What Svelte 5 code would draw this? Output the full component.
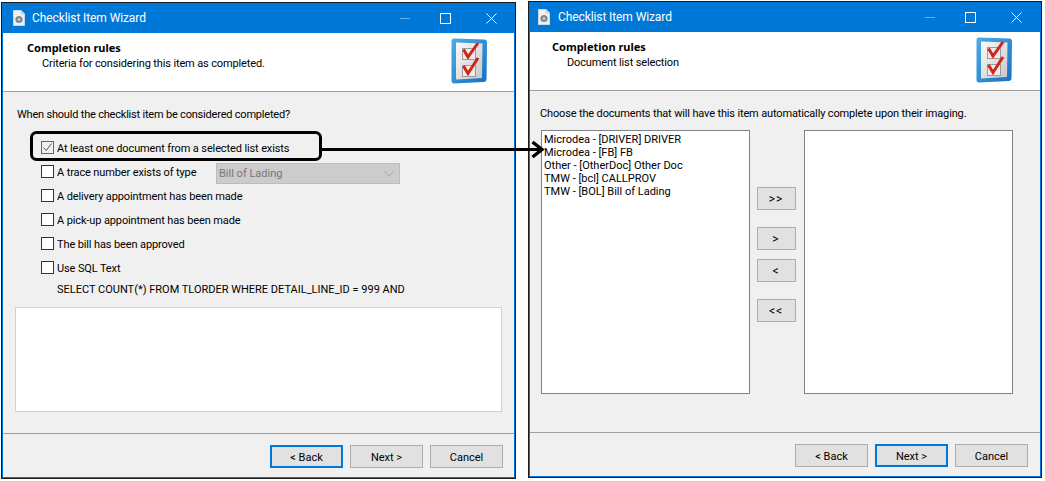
<script>
	const rules = [
		{ text: 'At least one document from a selected list exists', checked: true },
		{ text: 'A trace number exists of type', combo: 'Bill of Lading' },
		{ text: 'A delivery appointment has been made' },
		{ text: 'A pick-up appointment has been made' },
		{ text: 'The bill has been approved' },
		{ text: 'Use SQL Text' }
	];

	const documents = [
		'Microdea - [DRIVER] DRIVER',
		'Microdea - [FB] FB',
		'Other - [OtherDoc] Other Doc',
		'TMW - [bcl] CALLPROV',
		'TMW - [BOL] Bill of Lading'
	];

	const moves = ['>>', '>', '<', '<<'];
</script>

{#snippet titlebar()}
	<div class="titlebar">
		<svg class="app-icon" width="12" height="16" viewBox="0 0 12 16">
			<path d="M0.5 0.5H8L11.5 4V15.5H0.5Z" fill="#eef1f4" stroke="#cfd6dc" />
			<path d="M8 0.5V4H11.5" fill="#dfe4e8" stroke="#b9c2c9" stroke-width="0.6" />
			<circle cx="6" cy="9.5" r="3.6" fill="#7f8b94" />
			<circle cx="6" cy="9.5" r="1.2" fill="#d5dade" />
		</svg>
		<span class="title">Checklist Item Wizard</span>
		<div class="controls">
			<svg class="ctl-min" width="10" height="10" viewBox="0 0 10 10"><path d="M0 5.5H10" stroke="#66aee7" /></svg>
			<svg class="ctl-max" width="11" height="11" viewBox="0 0 11 11"><rect x="0.5" y="0.5" width="10" height="10" fill="none" stroke="#fff" /></svg>
			<svg class="ctl-close" width="11" height="11" viewBox="0 0 11 11"><path d="M0.5 0.5L10.5 10.5M10.5 0.5L0.5 10.5" stroke="#fff" /></svg>
		</div>
	</div>
{/snippet}

{#snippet banner(subtitle)}
	<div class="banner">
		<div class="banner-text">
			<b>Completion rules</b>
			<span>{subtitle}</span>
		</div>
		<svg class="check-icon" width="37" height="46" viewBox="0 0 37 46">
			<defs>
				<linearGradient id="frame" x1="0" y1="0" x2="1" y2="1">
					<stop offset="0" stop-color="#4aaee8" />
					<stop offset="1" stop-color="#1670c4" />
				</linearGradient>
				<linearGradient id="paper" x1="0" y1="0" x2="1" y2="1">
					<stop offset="0" stop-color="#fafafa" />
					<stop offset="1" stop-color="#c8c8c8" />
				</linearGradient>
			</defs>
			<path d="M3 0.5L33 1.5Q36 1.6 36 4.5L35.5 41Q35.5 44 32.5 44L3 45.5Q0.5 45.5 0.5 42.5L0.5 3Q0.5 0.5 3 0.5Z" fill="url(#frame)" />
			<path d="M5 4.5L31.5 5.5L31 40L5 41.5Z" fill="url(#paper)" />
			<rect x="11.5" y="10.5" width="13" height="11" fill="#ececec" stroke="#9a9a9a" />
			<rect x="11.5" y="27.5" width="13" height="11" fill="#ececec" stroke="#9a9a9a" />
			<path d="M12.5 11.5L17 19L27 5" fill="none" stroke="#d3241a" stroke-width="3" />
			<path d="M12.5 28L17 35.5L27 20" fill="none" stroke="#d3241a" stroke-width="3" />
		</svg>
	</div>
{/snippet}

<div class="screen">
	<section class="window first">
		<div class="frame">
			{@render titlebar()}
			{@render banner('Criteria for considering this item as completed.')}
			<div class="body rules-body">
				<p class="prompt">When should the checklist item be considered completed?</p>
				<ul class="rules">
					{#each rules as rule}
						<li>
							<span class="box">
								{#if rule.checked}
									<svg width="11" height="11" viewBox="0 0 11 11"><path d="M1.5 5.5L4.2 8.5L9.5 1.5" fill="none" stroke="#555" /></svg>
								{/if}
							</span>
							<span class="rule-text" class:with-combo={rule.combo}>{rule.text}</span>
							{#if rule.combo}
								<div class="combo">
									<span>{rule.combo}</span>
									<svg width="10" height="6" viewBox="0 0 10 6"><path d="M0.5 0.5L5 5L9.5 0.5" fill="none" stroke="#a8a8a8" /></svg>
								</div>
							{/if}
						</li>
					{/each}
				</ul>
				<p class="sql">SELECT COUNT(*) FROM TLORDER WHERE DETAIL_LINE_ID = 999 AND</p>
				<div class="sql-box"></div>
			</div>
			<div class="footer">
				<button class="default">&lt; Back</button>
				<button>Next &gt;</button>
				<button>Cancel</button>
			</div>
		</div>
	</section>

	<section class="window second">
		<div class="frame">
			{@render titlebar()}
			{@render banner('Document list selection')}
			<div class="body docs-body">
				<p class="prompt">Choose the documents that will have this item automatically complete upon their imaging.</p>
				<div class="picker">
					<div class="list">
						{#each documents as doc}
							<div>{doc}</div>
						{/each}
					</div>
					<div class="moves">
						{#each moves as move}
							<button>{move}</button>
						{/each}
					</div>
					<div class="list"></div>
				</div>
			</div>
			<div class="footer">
				<button>&lt; Back</button>
				<button class="default">Next &gt;</button>
				<button>Cancel</button>
			</div>
		</div>
	</section>

	<!-- callout drawn over both windows -->
	<svg class="callout" width="1045" height="481" viewBox="0 0 1045 481">
		<rect x="31.5" y="132.5" width="289" height="27" rx="5" fill="none" stroke="#000" stroke-width="3" />
		<path d="M321 149.5H541" stroke="#000" stroke-width="3" />
		<path d="M532.5 142L542 149.5L532.5 157" fill="none" stroke="#000" stroke-width="3.4" />
	</svg>
</div>

<style>
	:global(body) {
		background: #fff;
	}

	.screen {
		position: relative;
		width: 1045px;
		height: 481px;
		display: flex;
		align-items: flex-start;
		gap: 12px;
		padding: 1px 0 0 1px;
		box-sizing: border-box;
		font-family: Roboto, sans-serif;
		font-size: 11px;
		color: #000;
		overflow: hidden;
	}

	.window {
		box-sizing: border-box;
		height: 477px;
		border: 1px solid #1a1a1a;
	}

	.first {
		width: 515px;
		margin-top: 1px;
	}

	.second {
		width: 514px;
	}

	.frame {
		box-sizing: border-box;
		height: 100%;
		display: flex;
		flex-direction: column;
		border: 1px solid #0078d7;
		border-top: none;
		background: #f0f0f0;
	}

	.titlebar {
		flex: none;
		height: 30px;
		display: flex;
		align-items: center;
		padding-left: 10px;
		background: #0078d7;
		color: #fff;
	}

	.second .titlebar {
		padding-left: 8px;
	}

	.title {
		margin-left: 7px;
		font-size: 12px;
		letter-spacing: -0.1px;
	}

	.second .title {
		margin-left: 8px;
	}

	.controls {
		margin-left: auto;
		display: flex;
		align-items: center;
		padding-right: 18px;
	}

	.first .controls {
		padding-right: 17px;
	}

	.ctl-max {
		margin: 0 35px 0 30px;
	}

	.banner {
		flex: none;
		height: 59px;
		display: flex;
		justify-content: space-between;
		box-sizing: border-box;
		padding: 5px 27px 0 24px;
		background: #fff;
		border-bottom: 1px solid #a0a0a0;
	}

	.first .banner {
		padding-right: 26px;
	}

	.second .banner {
		padding-left: 22px;
	}

	.banner-text {
		display: flex;
		flex-direction: column;
		line-height: 16px;
		padding-top: 2px;
		letter-spacing: -0.13px;
	}

	.banner-text b {
		font-family: 'Noto Sans', sans-serif;
		font-weight: 700;
		letter-spacing: 0;
	}

	.banner-text span {
		padding-left: 15px;
	}

	.body {
		flex: 1;
		min-height: 0;
	}

	.prompt {
		margin: 0;
		line-height: 15px;
		letter-spacing: -0.15px;
	}

	.rules-body {
		padding: 15px 13px 0;
	}

	.rules-body .prompt {
		margin-left: 1px;
		letter-spacing: -0.2px;
	}

	.rules {
		list-style: none;
		margin: 13px 0 0;
		padding: 0 0 0 25px;
	}

	.rules li {
		height: 24px;
		display: flex;
		align-items: center;
	}

	.box {
		box-sizing: border-box;
		flex: none;
		width: 13px;
		height: 13px;
		border: 1px solid #333;
		background: #fff;
		display: flex;
		margin-right: 3px;
	}

	.rules li:first-child .box {
		background: #f0f0f0;
		border-color: #666;
	}

	.box svg {
		display: block;
	}

	.rule-text {
		white-space: nowrap;
		letter-spacing: -0.12px;
		padding-top: 2px;
	}

	.rule-text.with-combo {
		flex: none;
		width: 159px;
	}

	.combo {
		box-sizing: border-box;
		flex: none;
		width: 184px;
		height: 21px;
		margin-top: 5px;
		display: flex;
		align-items: center;
		justify-content: space-between;
		padding: 0 5px 0 2px;
		background: #cccccc;
		border: 1px solid #bcbcbc;
		color: #777;
	}

	.sql {
		margin: 3px 0 0 41px;
		line-height: 15px;
		white-space: nowrap;
	}

	.sql-box {
		box-sizing: border-box;
		width: 487px;
		height: 105px;
		margin: 10px 0 0 -1px;
		background: #fff;
		border: 1px solid #d0d0d0;
	}

	.docs-body {
		padding: 15px 10px 0;
	}

	.picker {
		display: flex;
		margin-top: 9px;
		padding-left: 1px;
	}

	.list {
		box-sizing: border-box;
		width: 209px;
		height: 264px;
		padding: 2px;
		background: #fff;
		border: 1px solid #82828c;
		line-height: 13px;
		white-space: nowrap;
	}

	.moves {
		box-sizing: border-box;
		flex: none;
		width: 54px;
		display: flex;
		flex-direction: column;
		align-items: center;
		padding: 57px 2px 0 0;
	}

	.moves button {
		width: 39px;
		height: 23px;
		margin-bottom: 9px;
		font-size: 12px;
		letter-spacing: 1px;
	}

	.moves button:nth-child(1),
	.moves button:nth-child(3) {
		margin-bottom: 17px;
	}

	button {
		box-sizing: border-box;
		width: 73px;
		height: 23px;
		padding: 1px 0 0;
		font: inherit;
		color: #000;
		background: #e1e1e1;
		border: 1px solid #adadad;
	}

	button.default {
		border: 2px solid #0078d7;
	}

	.footer {
		flex: none;
		height: 44px;
		display: flex;
		justify-content: flex-end;
		gap: 7px;
		padding: 11px 12px 0 0;
		box-sizing: border-box;
		border-top: 1px solid #a0a0a0;
	}

	.first .footer {
		padding-right: 11px;
	}

	.callout {
		position: absolute;
		left: 0;
		top: 0;
		pointer-events: none;
	}
</style>
